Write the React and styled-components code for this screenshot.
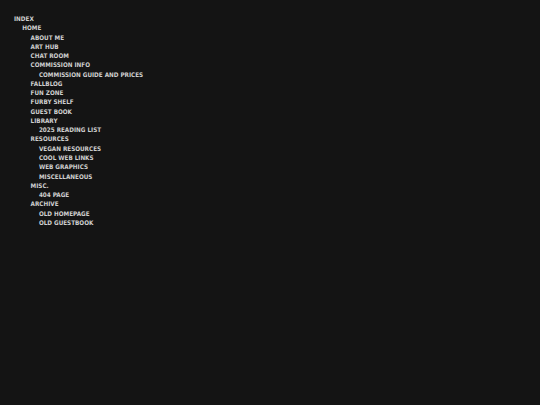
import React from 'react';
import styled, { createGlobalStyle } from 'styled-components';

const GlobalStyle = createGlobalStyle`
    html, body {
        margin: 0;
        padding: 0;
        background: #141414;
    }
    body {
        width: 540px;
        height: 405px;
        overflow: hidden;
    }
`

const Page = styled.div`
    padding: 14px 14px;
    font-family: "DejaVu Sans Condensed", "DejaVu Sans", sans-serif;
    font-weight: bold;
    font-size: 6.3px;
    color: #cfcfcf;
    text-transform: uppercase;
`

const Tree = styled.ul`
    list-style: none;
    margin: 0;
    padding: 0 0 0 ${props => props.$indent}px;
`

const Item = styled.li`
    line-height: 9.27px;
    white-space: nowrap;
`

const tree = [
    { label: 'Index', children: [
        { label: 'Home', children: [
            { label: 'About me' },
            { label: 'Art hub' },
            { label: 'Chat room' },
            { label: 'Commission info', children: [
                { label: 'Commission guide and prices' },
            ] },
            { label: 'Fallblog' },
            { label: 'Fun zone' },
            { label: 'Furby shelf' },
            { label: 'Guest book' },
            { label: 'Library', children: [
                { label: '2025 reading list' },
            ] },
            { label: 'Resources', children: [
                { label: 'Vegan resources' },
                { label: 'Cool web links' },
                { label: 'Web graphics' },
                { label: 'Miscellaneous' },
            ] },
            { label: 'Misc.', children: [
                { label: '404 page' },
            ] },
            { label: 'Archive', children: [
                { label: 'Old homepage' },
                { label: 'Old guestbook' },
            ] },
        ] },
    ] },
]

const Branch = ({ nodes, indent }) => (
    <Tree $indent={indent}>
        {nodes.map(node => (
            <Item key={node.label}>
                {node.label}
                {node.children && <Branch nodes={node.children} indent={8.3} />}
            </Item>
        ))}
    </Tree>
)

const App = () => (
    <>
        <GlobalStyle />
        <Page>
            <Branch nodes={tree} indent={0} />
        </Page>
    </>
)

export default App;
